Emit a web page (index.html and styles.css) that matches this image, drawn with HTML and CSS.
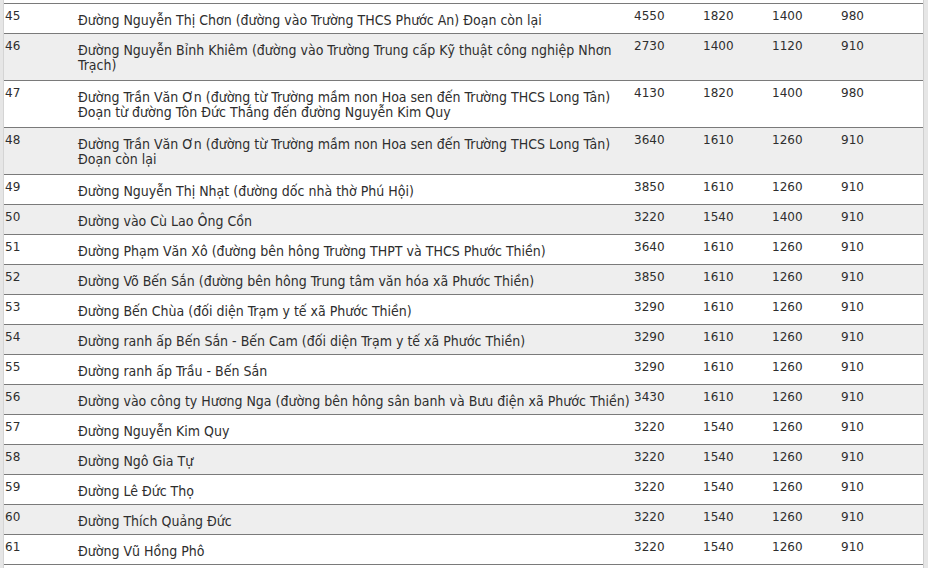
FILE: index.html
```html
<!DOCTYPE html>
<html lang="vi">
<head>
<meta charset="utf-8">
<title>Bảng giá đất</title>
<link rel="stylesheet" href="styles.css">
</head>
<body>
<div class="wrap">
<table class="grid">
<colgroup>
<col class="c-no"><col class="c-name"><col class="c-v"><col class="c-v"><col class="c-v"><col class="c-last">
</colgroup>
<tbody>
<tr class="odd"><td>45</td><td class="name">Đường Nguyễn Thị Chơn (đường vào Trường THCS Phước An) Đoạn còn lại</td><td>4550</td><td>1820</td><td>1400</td><td>980</td></tr>
<tr class="even tall"><td>46</td><td class="name">Đường Nguyễn Bỉnh Khiêm (đường vào Trường Trung cấp Kỹ thuật công nghiệp Nhơn<br>Trạch)</td><td>2730</td><td>1400</td><td>1120</td><td>910</td></tr>
<tr class="odd tall"><td>47</td><td class="name">Đường Trần Văn Ơn (đường từ Trường mầm non Hoa sen đến Trường THCS Long Tân)<br>Đoạn từ đường Tôn Đức Thắng đến đường Nguyễn Kim Quy</td><td>4130</td><td>1820</td><td>1400</td><td>980</td></tr>
<tr class="even tall"><td>48</td><td class="name">Đường Trần Văn Ơn (đường từ Trường mầm non Hoa sen đến Trường THCS Long Tân)<br>Đoạn còn lại</td><td>3640</td><td>1610</td><td>1260</td><td>910</td></tr>
<tr class="odd"><td>49</td><td class="name">Đường Nguyễn Thị Nhạt (đường dốc nhà thờ Phú Hội)</td><td>3850</td><td>1610</td><td>1260</td><td>910</td></tr>
<tr class="even"><td>50</td><td class="name">Đường vào Cù Lao Ông Cồn</td><td>3220</td><td>1540</td><td>1400</td><td>910</td></tr>
<tr class="odd"><td>51</td><td class="name">Đường Phạm Văn Xô (đường bên hông Trường THPT và THCS Phước Thiền)</td><td>3640</td><td>1610</td><td>1260</td><td>910</td></tr>
<tr class="even"><td>52</td><td class="name">Đường Võ Bến Sắn (đường bên hông Trung tâm văn hóa xã Phước Thiền)</td><td>3850</td><td>1610</td><td>1260</td><td>910</td></tr>
<tr class="odd"><td>53</td><td class="name">Đường Bến Chùa (đối diện Trạm y tế xã Phước Thiền)</td><td>3290</td><td>1610</td><td>1260</td><td>910</td></tr>
<tr class="even"><td>54</td><td class="name">Đường ranh ấp Bến Sắn - Bến Cam (đối diện Trạm y tế xã Phước Thiền)</td><td>3290</td><td>1610</td><td>1260</td><td>910</td></tr>
<tr class="odd"><td>55</td><td class="name">Đường ranh ấp Trầu - Bến Sắn</td><td>3290</td><td>1610</td><td>1260</td><td>910</td></tr>
<tr class="even"><td>56</td><td class="name">Đường vào công ty Hương Nga (đường bên hông sân banh và Bưu điện xã Phước Thiền)</td><td>3430</td><td>1610</td><td>1260</td><td>910</td></tr>
<tr class="odd"><td>57</td><td class="name">Đường Nguyễn Kim Quy</td><td>3220</td><td>1540</td><td>1260</td><td>910</td></tr>
<tr class="even"><td>58</td><td class="name">Đường Ngô Gia Tự</td><td>3220</td><td>1540</td><td>1260</td><td>910</td></tr>
<tr class="odd"><td>59</td><td class="name">Đường Lê Đức Thọ</td><td>3220</td><td>1540</td><td>1260</td><td>910</td></tr>
<tr class="even"><td>60</td><td class="name">Đường Thích Quảng Đức</td><td>3220</td><td>1540</td><td>1260</td><td>910</td></tr>
<tr class="odd"><td>61</td><td class="name">Đường Vũ Hồng Phô</td><td>3220</td><td>1540</td><td>1260</td><td>910</td></tr>
</tbody>
</table>
</div>
</body>
</html>
```
FILE: styles.css
```css
html, body {
  margin: 0;
  padding: 0;
  background: #e6e6e6;
}
.wrap {
  width: 919px;
  margin-left: 3px;
  padding-top: 3px;
  padding-bottom: 8px;
  background: #fff;
  border-left: 1px solid #d4d4d4;
  border-right: 1px solid #cfcfcf;
}
.grid {
  width: 919px;
  border-collapse: collapse;
  table-layout: fixed;
  font-family: "DejaVu Sans", "Liberation Sans", sans-serif;
  font-size: 12px;
  color: #2e2e2e;
}
.c-no { width: 72px; }
.c-name { width: 556px; }
.c-v { width: 69px; }
.c-last { width: 84px; }
.grid tr {
  height: 30px;
  border-top: 1px solid #7a7a7a;
  border-bottom: 1px solid #7a7a7a;
}
.grid tr.tall { height: 47px; }
.grid tr.even { background: #eeeeee; }
.grid tr.odd { background: #ffffff; }
.grid td {
  vertical-align: top;
  padding: 5px 2px 0 2px;
  line-height: 15px;
  white-space: nowrap;
}
.grid td:first-child { padding-left: 1px; }
.grid td.name {
  padding-top: 9px;
  font-family: "DejaVu Sans Condensed", "DejaVu Sans", sans-serif;
  font-stretch: condensed;
  font-size: 14px;
}
```
